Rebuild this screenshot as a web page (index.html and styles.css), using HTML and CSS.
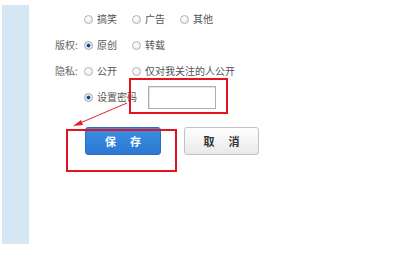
FILE: index.html
```html
<!DOCTYPE html>
<html lang="zh">
<head>
<meta charset="utf-8">
<link rel="stylesheet" href="styles.css">
</head>
<body>
<div class="page">
  <div class="sidebar"></div>
  <div class="content">
    <div class="row">
      <span class="label"></span>
      <span class="opt"><span class="radio"></span>搞笑</span>
      <span class="opt"><span class="radio"></span>广告</span>
      <span class="opt"><span class="radio"></span>其他</span>
    </div>
    <div class="row">
      <span class="label">版权:</span>
      <span class="opt"><span class="radio on"></span>原创</span>
      <span class="opt"><span class="radio"></span>转载</span>
    </div>
    <div class="row">
      <span class="label">隐私:</span>
      <span class="opt"><span class="radio"></span>公开</span>
      <span class="opt"><span class="radio"></span>仅对我关注的人公开</span>
    </div>
    <div class="row">
      <span class="label"></span>
      <span class="opt tight"><span class="radio on"></span>设置密码</span>
      <span class="pwd"></span>
    </div>
    <div class="buttons">
      <button class="btn save">保存</button>
      <button class="btn cancel">取消</button>
    </div>
  </div>
  <div class="mark mark-pwd"></div>
  <div class="mark mark-save"></div>
  <svg class="arrow" width="400" height="255" viewBox="0 0 400 255">
    <line x1="127" y1="103" x2="80" y2="123" stroke="#e4202a" stroke-width="1"/>
    <polygon points="73,126 81,120 83,125" fill="#e4202a"/>
  </svg>
</div>
</body>
</html>
```
FILE: styles.css
```css
* { box-sizing: border-box; }
html, body { margin: 0; padding: 0; background: #fff; }
body {
  width: 400px;
  height: 255px;
  overflow: hidden;
  font-family: "Noto Sans CJK SC", "DejaVu Sans", sans-serif;
  font-size: 10px;
  color: #555;
}
.page {
  position: relative;
  display: flex;
  align-items: flex-start;
  padding: 5px 0 0 2px;
  width: 400px;
  height: 255px;
}
.sidebar {
  width: 27px;
  height: 239px;
  background: #d6e7f4;
  flex: none;
}
.content {
  margin-left: 26px;
  padding-top: 1px;
}
.row {
  display: flex;
  align-items: center;
  height: 26px;
  line-height: 1;
}
.label {
  width: 29px;
  flex: none;
  color: #666;
}
.opt {
  display: flex;
  align-items: center;
  margin-right: 15px;
  color: #555;
}
.opt.tight { margin-right: 11px; }
.radio {
  width: 9px;
  height: 9px;
  border-radius: 50%;
  border: 1px solid #b4b4b4;
  background: radial-gradient(circle at 40% 35%, #ffffff 0, #e6e6e6 100%);
  margin-right: 4px;
  flex: none;
  position: relative;
}
.radio.on {
  border-color: #9aa8b8;
  background: radial-gradient(circle, #1f3f73 0, #2a5490 35%, #dfe6ee 45%, #ffffff 100%);
}
.pwd {
  width: 68px;
  height: 23px;
  border: 1px solid #adadad;
  box-shadow: inset 1px 1px 1px #e2e2e2;
  background: #fff;
}
.buttons {
  display: flex;
  gap: 23px;
  margin-top: 17px;
  margin-left: 30px;
}
.btn {
  width: 76px;
  height: 28px;
  border-radius: 3px;
  font-family: "Noto Sans CJK SC", sans-serif;
  font-size: 11px;
  font-weight: bold;
  letter-spacing: 14px;
  text-indent: 14px;
  padding: 0;
  line-height: 26px;
}
.save {
  color: #fff;
  border: 1px solid #2a6fc2;
  background: linear-gradient(#3b8fe3, #2b78d2);
}
.cancel {
  width: 75px;
  color: #333;
  border: 1px solid #c2c2c2;
  background: linear-gradient(#fefefe, #e9e9e9);
}
.mark {
  position: absolute;
  border: 2px solid #e3141f;
}
.mark-pwd {
  left: 129px;
  top: 78px;
  width: 99px;
  height: 36px;
}
.mark-save {
  left: 66px;
  top: 129px;
  width: 111px;
  height: 43px;
}
.arrow {
  position: absolute;
  left: 0;
  top: 0;
  pointer-events: none;
}
```
